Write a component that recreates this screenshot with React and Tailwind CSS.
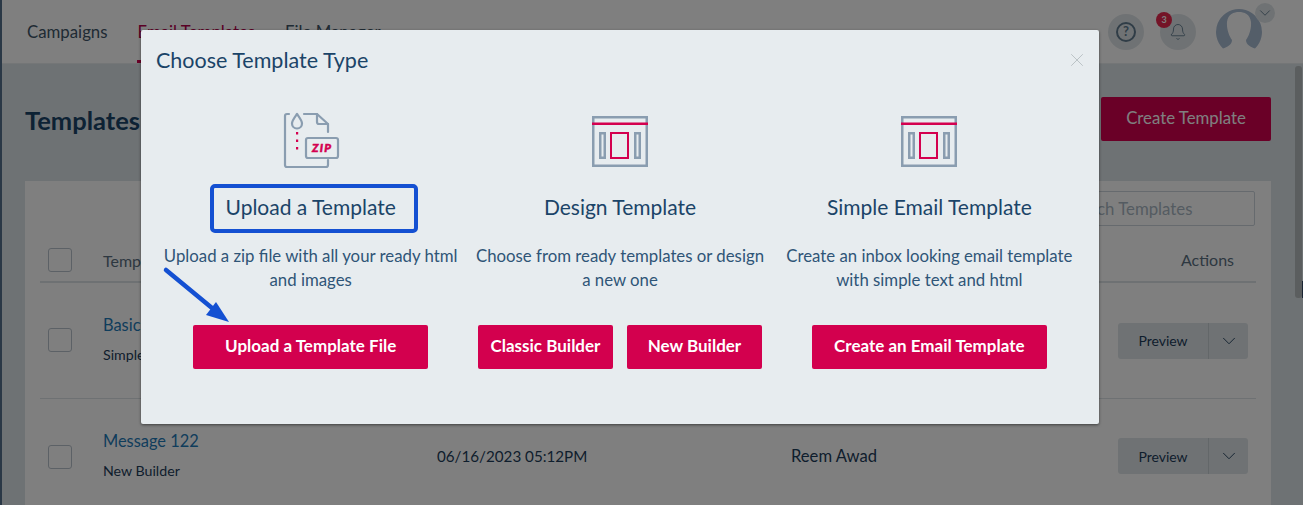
import React from "react";
import { ChevronDown, Bell, X } from "lucide-react";

const font = { fontFamily: '"Lato", "Noto Sans", sans-serif' };

function Check() {
  return <div className="w-6 h-6 rounded-[3px] border border-[#b9c3cc] bg-white shrink-0" />;
}

function Preview() {
  return (
    <div className="flex w-[130px] h-9 rounded-[3px] bg-[#dfe5e8] text-[#1d3c5a] text-[14px]">
      <div className="w-[91px] flex items-center justify-center border-r border-[#c6ced3]">Preview</div>
      <div className="flex-1 flex items-center justify-center">
        <ChevronDown size={22} strokeWidth={1} />
      </div>
    </div>
  );
}

function Row({ title, sub, date, owner, h, border, previewClass }) {
  return (
    <div className={`flex items-center mx-[15px] ${h} ${border ? "border-b border-[#dde2e6]" : ""}`}>
      <div className="w-[63px] pl-2 -mt-[1px]"><Check /></div>
      <div className="w-[334px] -mt-[4px]">
        <div className="text-[16.4px] leading-6 text-[#1f7ab8]">{title}</div>
        <div className="text-[14.2px] leading-5 mt-[8px] text-[#1d3c5a]">{sub}</div>
      </div>
      <div className="w-[354px] text-[15.2px] text-[#1d3c5a] -mt-[2px]">{date}</div>
      <div className="w-[327px] text-[16.6px] text-[#1d3c5a] -mt-[2px]">{owner}</div>
      <div className={previewClass}><Preview /></div>
    </div>
  );
}

function ZipIcon() {
  return (
    <svg width="58" height="60" viewBox="0 0 58 60" fill="none">
      <g transform="translate(1 0)">
        <g stroke="#8a9db0" strokeWidth="2.2" strokeLinejoin="round" strokeLinecap="round">
          <path d="M6 3H4a2 2 0 0 0-2 2V54a2 2 0 0 0 2 2H43a2 2 0 0 0 2-2V49" />
          <path d="M21 3H34L45 13V21" />
          <path d="M34 3V11a2 2 0 0 0 2 2H45" />
          <path d="M14 3C11.500 6.500 9 9.500 9 12.500a5 5 0 0 0 10 0C19 9.500 16.500 6.500 14 3Z" />
          <rect x="23" y="27" width="32" height="20" rx="2" />
        </g>
        <g fill="#d4004f">
          <rect x="13" y="21" width="2.200" height="2.500" />
          <rect x="13" y="28.500" width="2.200" height="2.500" />
          <rect x="13" y="36" width="2.200" height="2.500" />
        </g>
        <text x="29" y="41" fill="#d4004f" stroke="#d4004f" strokeWidth="0.5" fontSize="11.500" fontWeight="900" fontStyle="italic" letterSpacing="1.2" style={font}>ZIP</text>
      </g>
    </svg>
  );
}

function BuilderIcon() {
  return (
    <svg width="56" height="51" viewBox="0 0 56 51" fill="none">
      <rect x="1.250" y="1.250" width="53.500" height="48.500" stroke="#8a9db0" strokeWidth="2.500" />
      <rect x="8.250" y="17.250" width="4.500" height="24.500" stroke="#8a9db0" strokeWidth="2.500" />
      <rect x="43.250" y="17.250" width="4.500" height="24.500" stroke="#8a9db0" strokeWidth="2.500" />
      <rect x="0" y="6.500" width="56" height="2.500" fill="#d4004f" />
      <rect x="19" y="17" width="17" height="25" stroke="#d4004f" strokeWidth="2" />
    </svg>
  );
}

function ActionBtn({ w, children }) {
  return (
    <div className={`${w} h-11 rounded-[2px] bg-[#d3004e] text-white text-[17px] font-bold flex items-center justify-center pb-[2px]`}>
      {children}
    </div>
  );
}

function Col({ icon, title, desc, children }) {
  return (
    <div className="flex flex-col items-center">
      <div className="h-[58px] mt-[20px] flex items-center justify-center">{icon}</div>
      <div className="text-[21px] leading-7 mt-[23px] text-[#1b4468]">{title}</div>
      <div className="text-[16.8px] leading-6 mt-[23px] text-center text-[#2f5577] px-[5px] h-12">{desc}</div>
      <div className="flex gap-[14px] mt-[33px]">{children}</div>
    </div>
  );
}

export default function App() {
  return (
    <div className="relative w-[1303px] h-[505px] overflow-hidden bg-[#dde5e8] flex" style={font}>
      <div className="w-[2px] bg-[#55708c] shrink-0" />
      <div className="flex-1 min-w-0 flex flex-col">
        <div className="h-[64px] bg-white flex items-center shrink-0 border-b border-[#e8ecee]">
          <div className="flex pl-[25px] text-[16.8px] gap-[30px] text-[#3f5668] h-full items-center">
            <div>Campaigns</div>
            <div className="relative h-full flex items-center text-[#b5004a]">
              Email Templates
              <div className="absolute left-0 right-0 bottom-0 h-[3px] bg-[#d4004f]" />
            </div>
            <div>File Manager</div>
          </div>
          <div className="ml-auto flex items-center pr-[41px]">
            <div className="w-9 h-9 rounded-full bg-[#dfe5e8] flex items-center justify-center mr-[16px] mt-[1px]">
              <div className="w-[20px] h-[20px] rounded-full border-2 border-[#607a8e] flex items-center justify-center text-[13px] font-bold text-[#607a8e]">?</div>
            </div>
            <div className="relative w-9 h-9 rounded-full bg-[#dfe5e8] flex items-center justify-center mr-[20px] mt-[1px]">
              <Bell size={18} strokeWidth={1.2} className="text-[#607a8e]" />
              <div className="absolute -left-1 -top-[2px] w-4 h-4 rounded-full bg-[#e8294f] text-white text-[9px] font-bold flex items-center justify-center">3</div>
            </div>
            <div className="relative w-[46px] h-[46px] -mt-[16px]">
              <svg width="46" height="40" viewBox="0 0 46 40" className="mt-[8px]">
                <path d="M23 0A23 23 0 0 0 7 39.500C11 38 16 36 16 31C13 27 10.500 20 11 13C12 5 18 3 23 3C28 3 34 5 35 13C35.500 20 33 27 30 31C30 36 35 38 39 39.500A23 23 0 0 0 23 0Z" fill="#a9bcd3" />
              </svg>
              <div className="absolute -right-[13px] top-[2px] w-5 h-5 rounded-full bg-[#dfe5e8] flex items-center justify-center">
                <ChevronDown size={18} strokeWidth={1.2} className="text-[#607a8e]" />
              </div>
            </div>
          </div>
        </div>

        <div className="flex-1 min-h-0 flex">
          <div className="flex-1 min-w-0 pl-[23px] pr-[24px]">
            <div className="flex items-center justify-between pt-[33px] h-[117px] pb-[40px]">
              <div className="text-[25.500px] font-bold text-[#1b4468] mt-[2px]">Templates</div>
              <div className="w-[170px] h-11 rounded-[2px] bg-[#d4004f] text-white text-[16.8px] flex items-center justify-center pb-[2px]">Create Template</div>
            </div>
            <div className="bg-white h-[400px]">
              <div className="h-[59px] flex justify-end items-start pt-[10px] pr-[16px]">
                <div className="w-[200px] h-[35px] border border-[#ccd5dd] rounded-[2px] text-[16.8px] text-[#a9b7c3] flex items-center pl-[9px]">Search Templates</div>
              </div>
              <div className="flex items-center mx-[15px] h-[43px] border-b-2 border-[#dde2e6] text-[#5b7082] text-[16px]">
                <div className="w-[63px] pl-2 -mt-[2px]"><Check /></div>
                <div>Template Name</div>
                <div className="ml-auto pr-[22px] -mt-[2px]">Actions</div>
              </div>
              <Row h="h-[116px]" border title="Basic" sub="Simple Email" date="06/16/2023 05:30PM" owner="Reem Awad" />
              <Row h="h-[116px]" previewClass="-mt-[2px]" title="Message 122" sub="New Builder" date="06/16/2023 05:12PM" owner="Reem Awad" />
            </div>
          </div>
          <div className="w-[8px] shrink-0 bg-[#dde5e8] pt-[2px]">
            <div className="w-[7px] h-[232px] rounded-[3px] bg-[#b7bcbe]" />
          </div>
        </div>
      </div>

      <div className="absolute inset-0 bg-black/50" />

      <div className="absolute right-0 top-[281px] w-[1px] h-[17px] bg-[#1a2533]" />

      <div className="absolute left-[141px] top-[30px] w-[958px] h-[394px] bg-[#e7ecef] rounded-[2px] px-[15px] shadow-[0_1px_3px_rgba(0,0,0,0.5)]">
        <div className="flex items-center justify-between h-[62px] text-[#1b4468] pb-[2px]">
          <div className="text-[21.500px]">Choose Template Type</div>
          <X size={22} strokeWidth={1} className="text-[#b7bec2] -mr-[4px]" />
        </div>
        <div className="grid grid-cols-3">
          <Col icon={<ZipIcon />} title="Upload a Template" desc="Upload a zip file with all your ready html and images">
            <ActionBtn w="w-[235px]">Upload a Template File</ActionBtn>
          </Col>
          <Col icon={<BuilderIcon />} title="Design Template" desc="Choose from ready templates or design a new one">
            <ActionBtn w="w-[135px]">Classic Builder</ActionBtn>
            <ActionBtn w="w-[135px]">New Builder</ActionBtn>
          </Col>
          <Col icon={<BuilderIcon />} title="Simple Email Template" desc="Create an inbox looking email template with simple text and html">
            <ActionBtn w="w-[235px]">Create an Email Template</ActionBtn>
          </Col>
        </div>
      </div>

      <div className="absolute left-[210px] top-[184px] w-[208px] h-[49px] border-[4px] border-[#1450d2] rounded-[5px]" />
      <svg className="absolute left-[160px] top-[265px]" width="75" height="62" viewBox="0 0 75 62" fill="none">
        <path d="M6 5L52 43" stroke="#1450d2" strokeWidth="4.500" strokeLinecap="round" />
        <path d="M69 57L56 37L46 50Z" fill="#1450d2" />
      </svg>
    </div>
  );
}
